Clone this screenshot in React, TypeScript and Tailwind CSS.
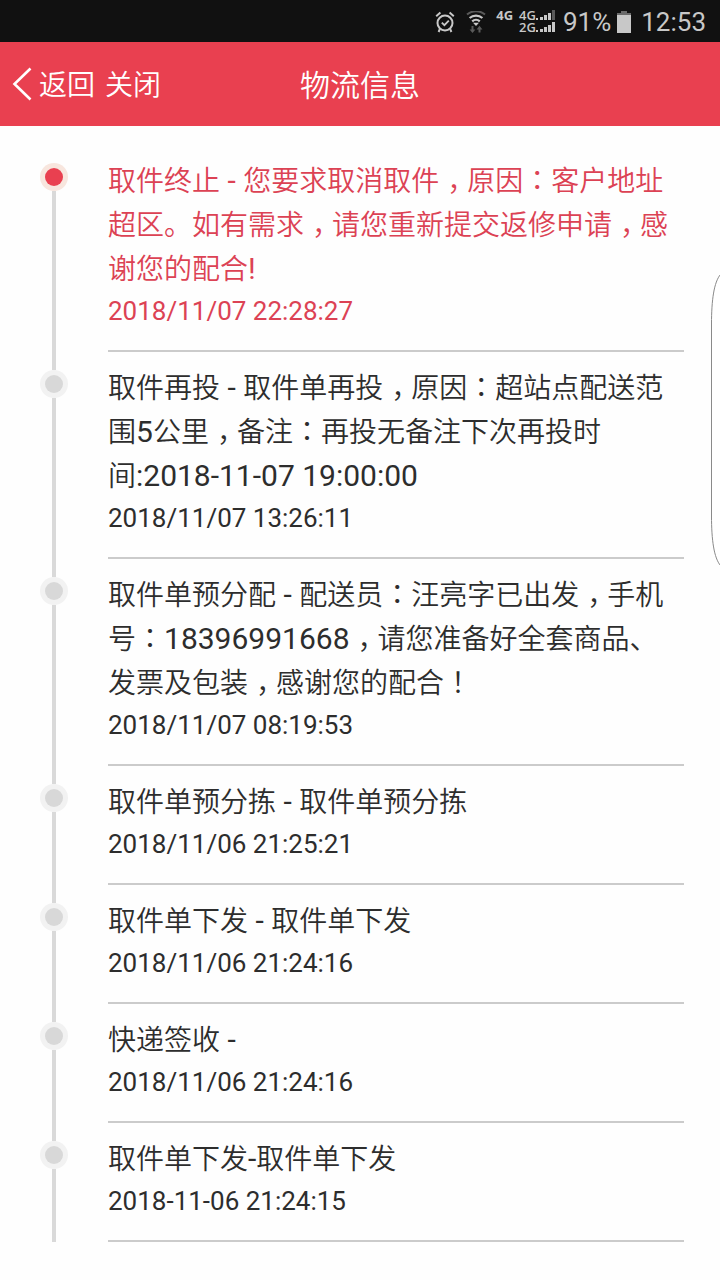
type TrackingEvent = {
  id: number;
  text: string;
  time: string;
};

const events: TrackingEvent[] = [
  {
    id: 7,
    text: "取件终止 - 您要求取消取件，原因：客户地址超区。如有需求，请您重新提交返修申请，感谢您的配合!",
    time: "2018/11/07 22:28:27",
  },
  {
    id: 6,
    text: "取件再投 - 取件单再投，原因：超站点配送范围5公里，备注：再投无备注下次再投时间:2018-11-07 19:00:00",
    time: "2018/11/07 13:26:11",
  },
  {
    id: 5,
    text: "取件单预分配 - 配送员：汪亮字已出发，手机号：18396991668，请您准备好全套商品、发票及包装，感谢您的配合！",
    time: "2018/11/07 08:19:53",
  },
  { id: 4, text: "取件单预分拣 - 取件单预分拣", time: "2018/11/06 21:25:21" },
  { id: 3, text: "取件单下发 - 取件单下发", time: "2018/11/06 21:24:16" },
  { id: 2, text: "快递签收 -", time: "2018/11/06 21:24:16" },
  { id: 1, text: "取件单下发-取件单下发", time: "2018-11-06 21:24:15" },
];

// Latin runs are set a little larger than the Chinese text, and full-width
// punctuation sits in the middle of its cell.
function MixedText({ text }: { text: string }) {
  return text.split(/([\x20-\x7e]+|[，：！])/).map((part, index) => {
    if (/^[\x20-\x7e]+$/.test(part)) {
      return (
        <span key={index} className="text-[30px] leading-none font-normal">
          {part}
        </span>
      );
    }
    if (part === "，") {
      return (
        <span key={index} className="-mr-2 pl-2 leading-none">
          {part}
        </span>
      );
    }
    if (part === "：" || part === "！") {
      return (
        <span key={index} lang="ja" className="font-['Noto_Sans_CJK_JP',sans-serif] leading-none">
          {part}
        </span>
      );
    }
    return part;
  });
}

function AlarmIcon() {
  return (
    <svg width="20" height="22" viewBox="0 0 20 22" fill="none" stroke="#c8c8c8" strokeWidth="2">
      <circle cx="10" cy="12" r="7.5" />
      <path d="M1.2 5.2 5.4 1.6M18.8 5.2 14.6 1.6M4.8 18.2 3.6 21M15.2 18.2 16.4 21" />
      <path d="m6.8 11.6 2.6 2.6 4.4-4.6" strokeWidth="1.8" />
    </svg>
  );
}

function WifiIcon() {
  return (
    <svg width="20" height="22" viewBox="0 0 20 22" fill="none" strokeWidth="2">
      <path d="M1 3.600a13.600 13.600 0 0 1 18 0" stroke="#5a5a5a" />
      <path d="M3.600 7a9.600 9.600 0 0 1 12.800 0M6.200 10.400a5.600 5.600 0 0 1 7.600 0" stroke="#c8c8c8" strokeWidth="2.2" />
      <path d="M7 11.800h6L10 15z" fill="#c8c8c8" />
      <path d="M6.500 15v4M13.500 21.500v-4" stroke="#5a5a5a" />
      <path d="M3.600 18.400h5.800L6.500 22zM10.600 18.400h5.800L13.500 14.800z" fill="#5a5a5a" />
    </svg>
  );
}

function SignalBars({ dimLast }: { dimLast?: boolean }) {
  return (
    <svg width="19" height="10" viewBox="0 0 19 10" fill="#c8c8c8">
      <path d="M0 8h2v2H0zM4 7h3v3H4zM8 5h3v5H8zM12 3h3v7h-3z" />
      <path d="M16 0h3v10h-3z" fill={dimLast ? "#5a5a5a" : "#c8c8c8"} />
    </svg>
  );
}

function BatteryIcon() {
  return (
    <svg width="14" height="22" viewBox="0 0 14 22">
      <path d="M4 0h6v2h4v2H0V2h4z" fill="#6a6a6a" />
      <path d="M0 4h14v18H0z" fill="#c8c8c8" />
    </svg>
  );
}

function StatusBar() {
  return (
    <div className="flex h-[42px] items-center justify-end bg-[#111111] pt-0.5 pr-3.5 text-[#c8c8c8]">
      <AlarmIcon />
      <span className="ml-[11px]">
        <WifiIcon />
      </span>
      <span className="mb-3.5 ml-2.5 font-['Open_Sans',sans-serif] text-[13px] leading-3 font-bold">4G</span>
      <div className="mb-0.5 ml-1.5 flex flex-col font-['Open_Sans',sans-serif] text-[13px] leading-3 font-semibold">
        <div className="flex items-center">
          4G
          <SignalBars dimLast />
        </div>
        <div className="flex items-center">
          2G
          <SignalBars />
        </div>
      </div>
      <span className="ml-2 text-[26px] leading-[40px]">91%</span>
      <span className="ml-1.5">
        <BatteryIcon />
      </span>
      <span className="ml-2.5 text-[26px] leading-[40px]">12:53</span>
    </div>
  );
}

function TitleBar() {
  return (
    <header className="grid h-[84px] grid-cols-[1fr_auto_1fr] items-center bg-[#e94050] px-3 font-[350] text-white">
      <nav className="flex items-center text-[28px] leading-[44px]">
        <button type="button" className="flex items-center">
          <svg width="20" height="34" viewBox="0 0 20 34" fill="none" stroke="currentColor" strokeWidth="2.6">
            <path d="M18.500 1.500 2.500 17l16 15.500" />
          </svg>
          <span className="ml-[7px] pt-1">返回</span>
        </button>
        <button type="button" className="ml-2.5 pt-1">
          关闭
        </button>
      </nav>
      <h1 className="pt-1 text-[30px] leading-[44px] font-[350]">物流信息</h1>
    </header>
  );
}

function TimelineItem({ event, active, first }: { event: TrackingEvent; active: boolean; first: boolean }) {
  return (
    <li className={`flex pr-9 ${active ? "text-[#dc4254]" : "text-[#2d2d2d]"}`}>
      <div className="flex w-[108px] shrink-0 flex-col items-center">
        <div className={`h-[18px] w-1 ${first ? "" : "bg-[#d9d9d9]"}`} />
        <div
          className={`flex size-7 items-center justify-center rounded-full ${active ? "bg-[#f8e6de]" : "bg-[#f2f2f2]"}`}
        >
          <div className={`size-[18px] rounded-full ${active ? "bg-[#e94050]" : "bg-[#d8d8d8]"}`} />
        </div>
        <div className="w-1 flex-1 bg-[#d9d9d9]" />
      </div>
      <div className="min-w-0 flex-1 border-b-2 border-[#cbcbcb] pt-[15px] pb-5">
        <p className="text-[28px] leading-[44px] font-[350]">
          <MixedText text={event.text} />
        </p>
        <time className="block text-[26px] leading-[38px]">{event.time}</time>
      </div>
    </li>
  );
}

export default function App() {
  return (
    <div
      lang="zh-CN"
      className="relative min-h-screen bg-[#fefefe] font-[Roboto,'Noto_Sans_CJK_SC',sans-serif]"
    >
      <StatusBar />
      <TitleBar />
      <main className="pt-[19px] pb-9">
        <ol>
          {events.map((event, index) => (
            <TimelineItem key={event.id} event={event} active={index === 0} first={index === 0} />
          ))}
        </ol>
      </main>

      {/* edge panel handle, floats over the page */}
      <svg
        className="absolute top-[274px] right-0"
        width="9"
        height="292"
        viewBox="0 0 9 292"
        fill="white"
        stroke="#8a8a8a"
      >
        <path d="M9.500 0.500C3 8 0.500 26 0.500 50v192c0 24 2.500 42 9 49.500" />
      </svg>
    </div>
  );
}
